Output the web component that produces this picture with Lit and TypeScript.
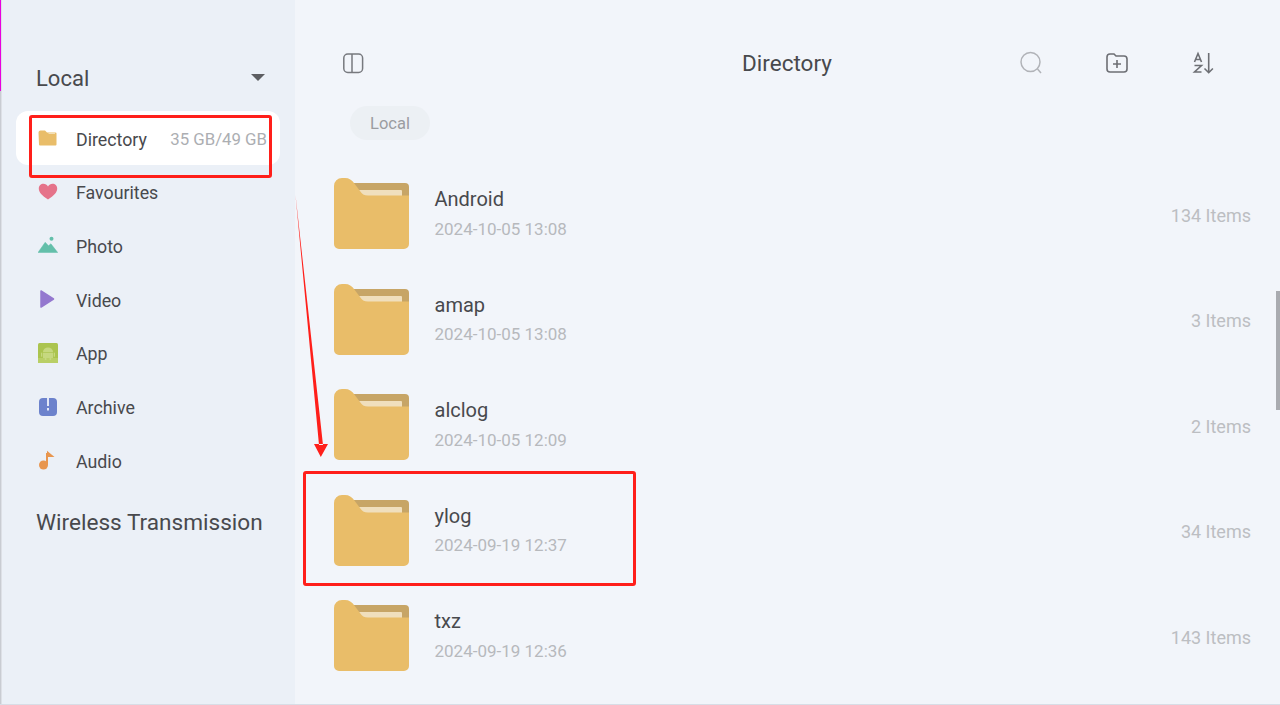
import { LitElement, html, css, svg } from "lit";
import { customElement } from "lit/decorators.js";

const folder = html`<svg class="folder" viewBox="0 0 75 72" width="75" height="72">
  <rect x="12" y="5" width="63" height="30" rx="4" fill="#c7a566"/>
  <rect x="20" y="12" width="48" height="14" rx="1" fill="#f0dfbd"/>
  <path d="M0 8a8 8 0 0 1 8-8h3c4 0 7 2 9 5l6 8c2 3 4 4.500 8 4.500h41V66a5 5 0 0 1-5 5H5a5 5 0 0 1-5-5z" fill="#e9bd69"/>
</svg>`;

const navIcons: Record<string, unknown> = {
  Directory: svg`<path d="M0.500 4.500a2 2 0 0 1 2-2h4.500l2 2h8.500a1 1 0 0 1 1 1v11a1 1 0 0 1-1 1h-15.500a1 1 0 0 1-1-1z" fill="#e9bd69"/><path d="M9.500 4.500H17v1.500H11z" fill="#f3dfb6"/>`,
  Favourites: svg`<path d="M10 17.500C4 13.500.8 10.500.8 6.500.8 3.700 3 1.800 5.400 1.800c2 0 3.500 1 4.600 2.700 1.100-1.700 2.600-2.700 4.600-2.700 2.400 0 4.600 1.900 4.600 4.700 0 4-3.200 7-9.200 11z" fill="#e5738a"/>`,
  Photo: svg`<circle cx="13.500" cy="2.700" r="2" fill="#63bfaa"/><path d="M0 16.500 7.200 6.300l3.300 3.500 2.400-2 6.800 8.700z" fill="#63bfaa" stroke="#63bfaa" stroke-width=".5" stroke-linejoin="round"/>`,
  Video: svg`<path d="M3 2 15.500 10 3 18z" fill="#9478cf" stroke="#9478cf" stroke-width="1.500" stroke-linejoin="round"/>`,
  App: svg`<rect x="0" y="0" width="20" height="20" rx="1.500" fill="#abc44f"/><path d="M0 15h20v5H0z" fill="#b9cf66"/><path d="M5 9a5 4.500 0 0 1 10 0z" fill="#c6d87f"/><rect x="5" y="9.700" width="10" height="5.300" fill="#c6d87f"/><rect x="3" y="9.700" width="1.300" height="4" fill="#c6d87f"/><rect x="15.700" y="9.700" width="1.300" height="4" fill="#c6d87f"/><rect x="6.800" y="15" width="1.600" height="2" fill="#c6d87f"/><rect x="11.600" y="15" width="1.600" height="2" fill="#c6d87f"/>`,
  Archive: svg`<rect x="1" y="1" width="18" height="18" rx="4" fill="#6c82cc"/><rect x="9" y="1" width="2" height="8" fill="#e3e8f6"/><rect x="9" y="11" width="2" height="2.500" fill="#e3e8f6"/>`,
  Audio: svg`<circle cx="5.500" cy="15" r="4.500" fill="#e8964f"/><rect x="8" y="3" width="2" height="12" fill="#e8964f"/><path d="M9 .8 16.500 7H9z" fill="#e8964f"/>`,
};

const nav = ["Directory", "Favourites", "Photo", "Video", "App", "Archive", "Audio"];
const rows = [
  ["Android", "2024-10-05 13:08", "134 Items"],
  ["amap", "2024-10-05 13:08", "3 Items"],
  ["alclog", "2024-10-05 12:09", "2 Items"],
  ["ylog", "2024-09-19 12:37", "34 Items"],
  ["txz", "2024-09-19 12:36", "143 Items"],
];

@customElement("app-root")
export class AppRoot extends LitElement {
  static styles = css`
    :host {
      display: flex;
      position: relative;
      width: 1280px;
      height: 705px;
      overflow: hidden;
      font-family: Roboto, "Liberation Sans", sans-serif;
      color: #48494d;
      background: #f2f5fa;
    }
    .side {
      box-sizing: border-box;
      width: 295px;
      height: 705px;
      flex: none;
      padding: 62px 15px 0 16px;
      background: #ebf0f7;
    }
    .side-head {
      display: flex;
      align-items: center;
      justify-content: space-between;
      height: 32px;
      padding: 0 15px 0 20px;
      font-size: 22px;
      margin-bottom: 17px;
    }
    .caret {
      width: 0;
      height: 0;
      border-left: 7px solid transparent;
      border-right: 7px solid transparent;
      border-top: 7px solid #5d5e62;
      margin-top: -1px;
    }
    .item {
      display: flex;
      align-items: center;
      box-sizing: border-box;
      height: 53.67px;
      padding: 3px 13px 0 22px;
      font-size: 17.8px;
      border-radius: 12px;
    }
    .item.active { background: #fff; }
    .item svg { flex: none; margin-right: 18px; margin-top: -2px; }
    .item .size {
      margin-left: auto;
      color: #acaeb2;
      font-size: 16.8px;
      white-space: nowrap;
    }
    .wireless {
      margin: 20px 0 0 20px;
      font-size: 22.6px;
      line-height: 32px;
      white-space: nowrap;
    }
    .main { flex: 1; min-width: 0; }
    .bar {
      display: grid;
      grid-template-columns: 24px 1fr 24px 24px 24px;
      align-items: center;
      height: 44px;
      padding: 41px 65px 0 46px;
      column-gap: 62px;
    }
    .bar h1 {
      margin: 0;
      font-weight: 400;
      font-size: 22.5px;
      text-align: center;
      padding-left: 190px;
      white-space: nowrap;
    }
    .chip {
      display: inline-flex;
      align-items: center;
      justify-content: center;
      box-sizing: border-box;
      width: 80px;
      height: 34px;
      margin: 21px 0 0 55px;
      border-radius: 17px;
      background: #ecf0f4;
      color: #9b9da1;
      font-size: 16.5px;
    }
    .list { margin-top: 21.5px; }
    .row {
      display: flex;
      align-items: center;
      box-sizing: border-box;
      height: 105.5px;
      padding: 0 29px 0 39px;
    }
    .folder { flex: none; margin-right: 25.5px; }
    .info { flex: 1; margin-top: -2px; }
    .name { font-size: 20px; line-height: 26px; }
    .date { font-size: 17px; line-height: 24px; color: #b7b9bd; margin-top: 4.5px; }
    .count { font-size: 18px; color: #bcbec2; margin-top: 2px; }
    .edge {
      position: absolute;
      left: 0;
      top: 0;
      width: 1px;
      height: 705px;
      background: #c9ccd2;
      box-shadow: 1px 0 0 rgba(200, 200, 205, 0.4);
    }
    .edge::before {
      content: "";
      position: absolute;
      left: 0;
      top: 0;
      width: 1px;
      height: 91px;
      background: #e800e0;
    }
    .baseline {
      position: absolute;
      left: 0;
      right: 0;
      bottom: 0;
      height: 1px;
      background: #d8dde6;
    }
    .thumb {
      position: absolute;
      left: 1276px;
      top: 291px;
      width: 4px;
      height: 119px;
      background: #a9abb0;
    }
    .mark {
      position: absolute;
      box-sizing: border-box;
      border: 3px solid #ff1f1a;
      border-radius: 3px;
    }
    .mark.one { left: 29px; top: 115px; width: 243px; height: 63px; }
    .mark.two { left: 303px; top: 471px; width: 333px; height: 115px; }
    .arrow { position: absolute; left: 0; top: 0; pointer-events: none; }
  `;

  render() {
    return html`
      <aside class="side">
        <div class="side-head"><span>Local</span><span class="caret"></span></div>
        ${nav.map(
          (n, i) => html`<div class="item ${i === 0 ? "active" : ""}">
            <svg viewBox="0 0 20 20" width="20" height="20">${navIcons[n]}</svg>
            <span>${n}</span>
            ${i === 0 ? html`<span class="size">35 GB/49 GB</span>` : ""}
          </div>`
        )}
        <div class="wireless">Wireless Transmission</div>
      </aside>
      <main class="main">
        <div class="bar">
          <svg viewBox="0 0 24 24" width="24" height="24" fill="none" stroke="#77797e" stroke-width="1.500">
            <rect x="2.800" y="3" width="18.800" height="18.500" rx="4"/><path d="M11 3v18.500"/>
          </svg>
          <h1>Directory</h1>
          <svg viewBox="0 0 24 24" width="24" height="24" fill="none" stroke="#b1b3b8" stroke-width="1.500">
            <circle cx="11.500" cy="11" r="9.500"/><path d="M18.500 18 22 22"/>
          </svg>
          <svg viewBox="0 0 24 24" width="24" height="24" fill="none" stroke="#6d6f74" stroke-width="1.600">
            <path d="M2 6a3 3 0 0 1 3-3h4l2 2h8a3 3 0 0 1 3 3v10a3 3 0 0 1-3 3H5a3 3 0 0 1-3-3z"/><path d="M12 9v8M8 13h8"/>
          </svg>
          <svg viewBox="0 0 24 24" width="24" height="24" fill="none" stroke="#6d6f74" stroke-width="1.600">
            <path d="M3.500 11 7 2.500l3.500 8.500M4.600 8.500h4.800M3.500 14.500h7l-7 6.500h7"/><path d="M17.700 2v19.500M13.500 17.500l4.200 4.200 4.200-4.200"/>
          </svg>
        </div>
        <div class="chip">Local</div>
        <div class="list">
          ${rows.map(
            ([n, d, c]) => html`<div class="row">
              ${folder}
              <div class="info"><div class="name">${n}</div><div class="date">${d}</div></div>
              <div class="count">${c}</div>
            </div>`
          )}
        </div>
      </main>
      <div class="edge"></div>
      <div class="baseline"></div>
      <div class="thumb"></div>
      <div class="mark one"></div>
      <div class="mark two"></div>
      <svg class="arrow" width="1280" height="705">
        <path d="M295.500 195 319 445 323 445Z M314 444 328 444 320.800 457Z" fill="#ff1f1a"/>
      </svg>
    `;
  }
}
